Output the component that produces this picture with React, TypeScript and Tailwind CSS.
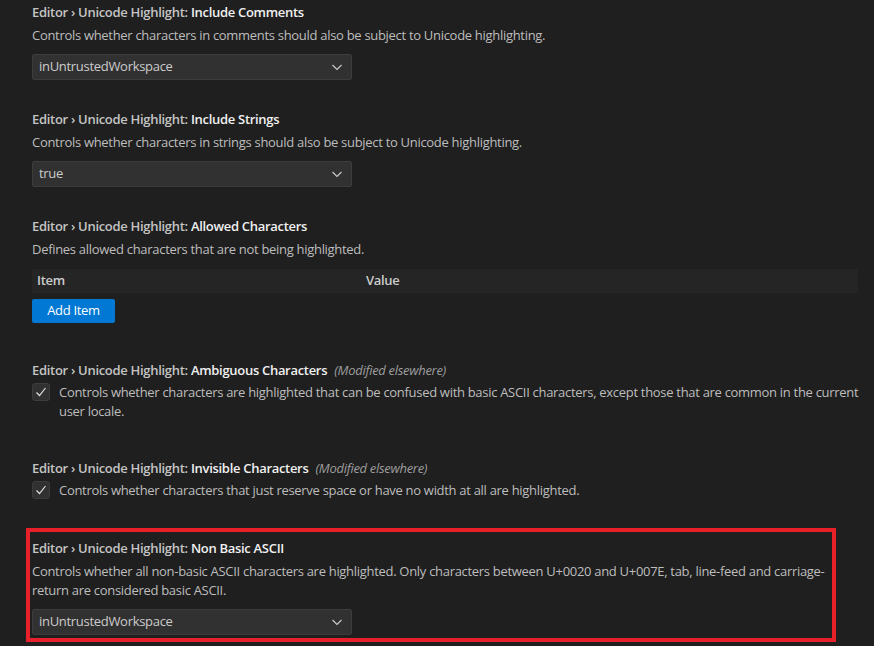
import React from "react"

const font = { fontFamily: '"Open Sans", "Noto Sans", sans-serif' }

function Chevron() {
  return (
    <svg width="16" height="16" viewBox="0 0 16 16" fill="none" className="text-[#cccccc]">
      <path d="M3.5 6l4.5 4.5L12.5 6" stroke="currentColor" strokeWidth="1.1" />
    </svg>
  )
}

function Check() {
  return (
    <div className="w-[18px] h-[18px] shrink-0 rounded-[3px] border border-[#3c3c3c] bg-[#313131] flex items-center justify-center">
      <svg width="16" height="16" viewBox="0 0 16 16" fill="none">
        <path d="M3.5 8.5l3 3 6-7.5" stroke="#e0e0e0" strokeWidth="1.2" />
      </svg>
    </div>
  )
}

function Title({ name, modified }: { name: string; modified?: boolean }) {
  return (
    <div className="h-[18px] leading-[18px] text-[13px] whitespace-nowrap">
      <span className="font-semibold text-[#c4c4c4]">Editor › Unicode Highlight: </span>
      <span className="font-semibold text-[#f0f0f0]">{name}</span>
      {modified && <span className="italic text-[13px] text-[#9d9d9d] ml-[7px]">(Modified elsewhere)</span>}
    </div>
  )
}

function Select({ value }: { value: string }) {
  return (
    <div className="w-[320px] h-[26px] bg-[#313131] border border-[#3c3c3c] rounded-[2px] flex items-center justify-between pl-[6px] pr-[6px] text-[13px] text-[#cccccc]">
      <span>{value}</span>
      <Chevron />
    </div>
  )
}

function Desc({ children }: { children: React.ReactNode }) {
  return <div className="text-[13px] leading-[19px] text-[#bdbdbd]">{children}</div>
}

export default function App() {
  return (
    <div className="w-[874px] h-[646px] bg-[#1f1f1f] overflow-hidden tracking-[-0.3px]" style={font}>
      <div className="pl-[32px] w-[858px] pt-[3px]">
        <section className="pb-[30px]">
          <Title name="Include Comments" />
          <div className="mt-[5px]">
            <Desc>Controls whether characters in comments should also be subject to Unicode highlighting.</Desc>
          </div>
          <div className="mt-[9px]">
            <Select value="inUntrustedWorkspace" />
          </div>
        </section>

        <section className="pb-[30px]">
          <Title name="Include Strings" />
          <div className="mt-[5px]">
            <Desc>Controls whether characters in strings should also be subject to Unicode highlighting.</Desc>
          </div>
          <div className="mt-[9px]">
            <Select value="true" />
          </div>
        </section>

        <section className="pb-[38px]">
          <Title name="Allowed Characters" />
          <div className="mt-[5px]">
            <Desc>Defines allowed characters that are not being highlighted.</Desc>
          </div>
          <div className="mt-[10px] h-[24px] bg-[#252525] flex items-center text-[13px] font-semibold text-[#cccccc]">
            <span className="pl-[5px] w-[334px]">Item</span>
            <span>Value</span>
          </div>
          <button className="mt-[6px] h-[24px] w-[83px] bg-[#0078d4] text-white text-[13px] rounded-[2px] block">
            Add Item
          </button>
        </section>

        <section className="pb-[38px]">
          <Title name="Ambiguous Characters" modified />
          <div className="mt-[4px] mr-[-10px] flex gap-[9px]">
            <Check />
            <Desc>
              Controls whether characters are highlighted that can be confused with basic ASCII characters, except those that are common in the current user locale.
            </Desc>
          </div>
        </section>

        <section className="pb-[39px]">
          <Title name="Invisible Characters" modified />
          <div className="mt-[4px] flex gap-[9px]">
            <Check />
            <Desc>Controls whether characters that just reserve space or have no width at all are highlighted.</Desc>
          </div>
        </section>

        <section className="relative">
          <div className="absolute left-[-6px] top-[-11px] w-[810px] h-[114px] border-[4px] border-[#e8202a] pointer-events-none" />
          <Title name="Non Basic ASCII" />
          <div className="mt-[5px]">
            <Desc>
              Controls whether all non-basic ASCII characters are highlighted. Only characters between U+0020 and U+007E, tab, line-feed and carriage-return are considered basic ASCII.
            </Desc>
          </div>
          <div className="mt-[9px]">
            <Select value="inUntrustedWorkspace" />
          </div>
        </section>
      </div>
    </div>
  )
}
